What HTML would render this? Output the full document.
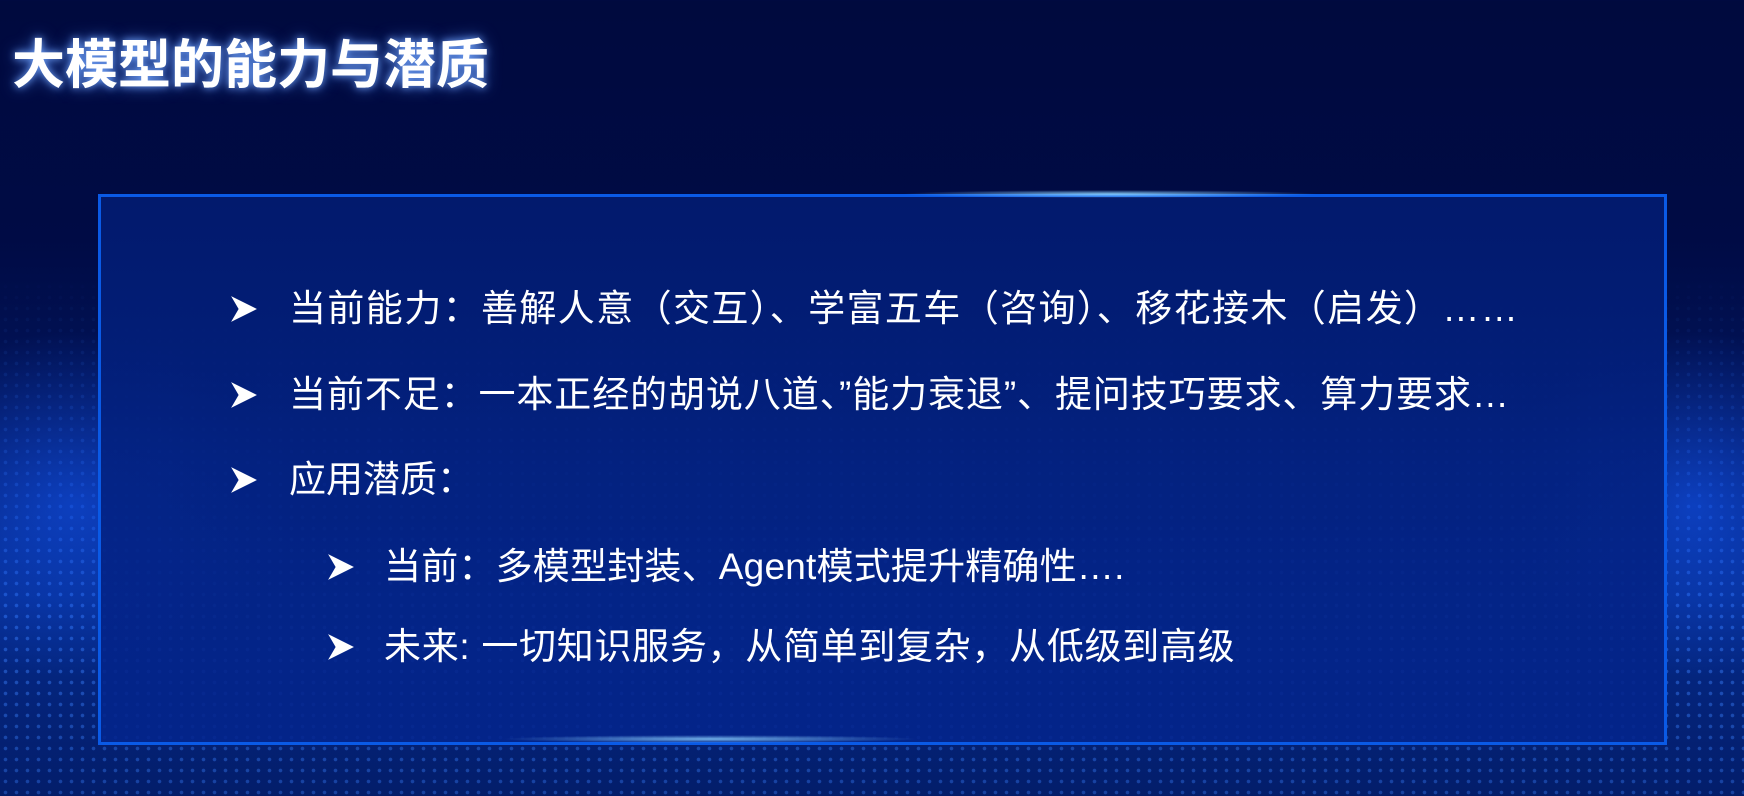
<!DOCTYPE html>
<html><head><meta charset="utf-8"><style>
html,body{margin:0;padding:0}
body{width:1744px;height:796px;overflow:hidden;position:relative;
background:linear-gradient(180deg,#000a3e 0%,#000b45 30%,#02165e 55%,#052a8a 75%,#031d6a 100%);
font-family:"Liberation Sans","Noto Sans CJK SC",sans-serif;}
.dots{position:absolute;left:0;top:270px;width:1744px;height:526px;
background-image:radial-gradient(circle,rgba(60,130,255,.6) 1.5px,transparent 2.1px);
background-size:11px 11px;
-webkit-mask-image:linear-gradient(180deg,transparent 0%,rgba(0,0,0,.3) 30%,rgba(0,0,0,.8) 65%,rgba(0,0,0,.6) 100%);}
.glowL{position:absolute;left:-150px;top:330px;width:450px;height:350px;background:radial-gradient(ellipse,rgba(20,90,255,.55),transparent 70%)}
.glowR{position:absolute;right:-150px;top:330px;width:400px;height:350px;background:radial-gradient(ellipse,rgba(20,90,255,.55),transparent 70%)}
.box{position:absolute;left:98px;top:194px;width:1563px;height:545px;border:3px solid #0a5ae6;
background:linear-gradient(180deg,rgba(2,26,110,.97) 0%,rgba(3,34,130,.92) 50%,rgba(3,36,140,.88) 100%);}
.topglow{position:absolute;left:900px;top:190px;width:420px;height:8px;background:radial-gradient(ellipse,rgba(140,210,255,.9),transparent 70%)}
.botglow{position:absolute;left:500px;top:735px;width:420px;height:8px;background:radial-gradient(ellipse,rgba(140,210,255,.8),transparent 70%)}
h1{position:absolute;left:12px;top:23px;margin:0;font-size:53px;font-weight:bold;color:#fff;letter-spacing:0px;
text-shadow:0 0 8px rgba(120,170,255,.9),0 0 16px rgba(80,140,255,.7);}
.l{position:absolute;color:#fff;font-size:37px;white-space:nowrap;line-height:46px}
.a{position:absolute;width:28px;height:28px}
</style></head><body>
<div class="dots"></div>
<div class="glowL"></div><div class="glowR"></div>
<div class="box"></div>
<div class="topglow"></div><div class="botglow"></div>
<h1>大模型的能力与潜质</h1>

<svg class="a" style="left:230px;top:295px" viewBox="0 0 26 26"><path d="M1 1 L25 13 L1 25 L8 13 Z" fill="#fff"/></svg>
<div class="l" style="left:289px;top:286px;letter-spacing:1.4px">当前能力：善解人意（交互）、学富五车（咨询）、移花接木（启发）……</div>

<svg class="a" style="left:230px;top:381px" viewBox="0 0 26 26"><path d="M1 1 L25 13 L1 25 L8 13 Z" fill="#fff"/></svg>
<div class="l" style="left:289px;top:372px;letter-spacing:0.9px">当前不足：一本正经的胡说八道、”能力衰退”、提问技巧要求、算力要求…</div>

<svg class="a" style="left:230px;top:466px" viewBox="0 0 26 26"><path d="M1 1 L25 13 L1 25 L8 13 Z" fill="#fff"/></svg>
<div class="l" style="left:289px;top:457px">应用潜质：</div>

<svg class="a" style="left:327px;top:553px" viewBox="0 0 26 26"><path d="M1 1 L25 13 L1 25 L8 13 Z" fill="#fff"/></svg>
<div class="l" style="left:384px;top:544px;letter-spacing:0.2px">当前：多模型封装、Agent模式提升精确性….</div>

<svg class="a" style="left:327px;top:633px" viewBox="0 0 26 26"><path d="M1 1 L25 13 L1 25 L8 13 Z" fill="#fff"/></svg>
<div class="l" style="left:384px;top:624px;letter-spacing:0.7px">未来: 一切知识服务，从简单到复杂，从低级到高级</div>
</body></html>
